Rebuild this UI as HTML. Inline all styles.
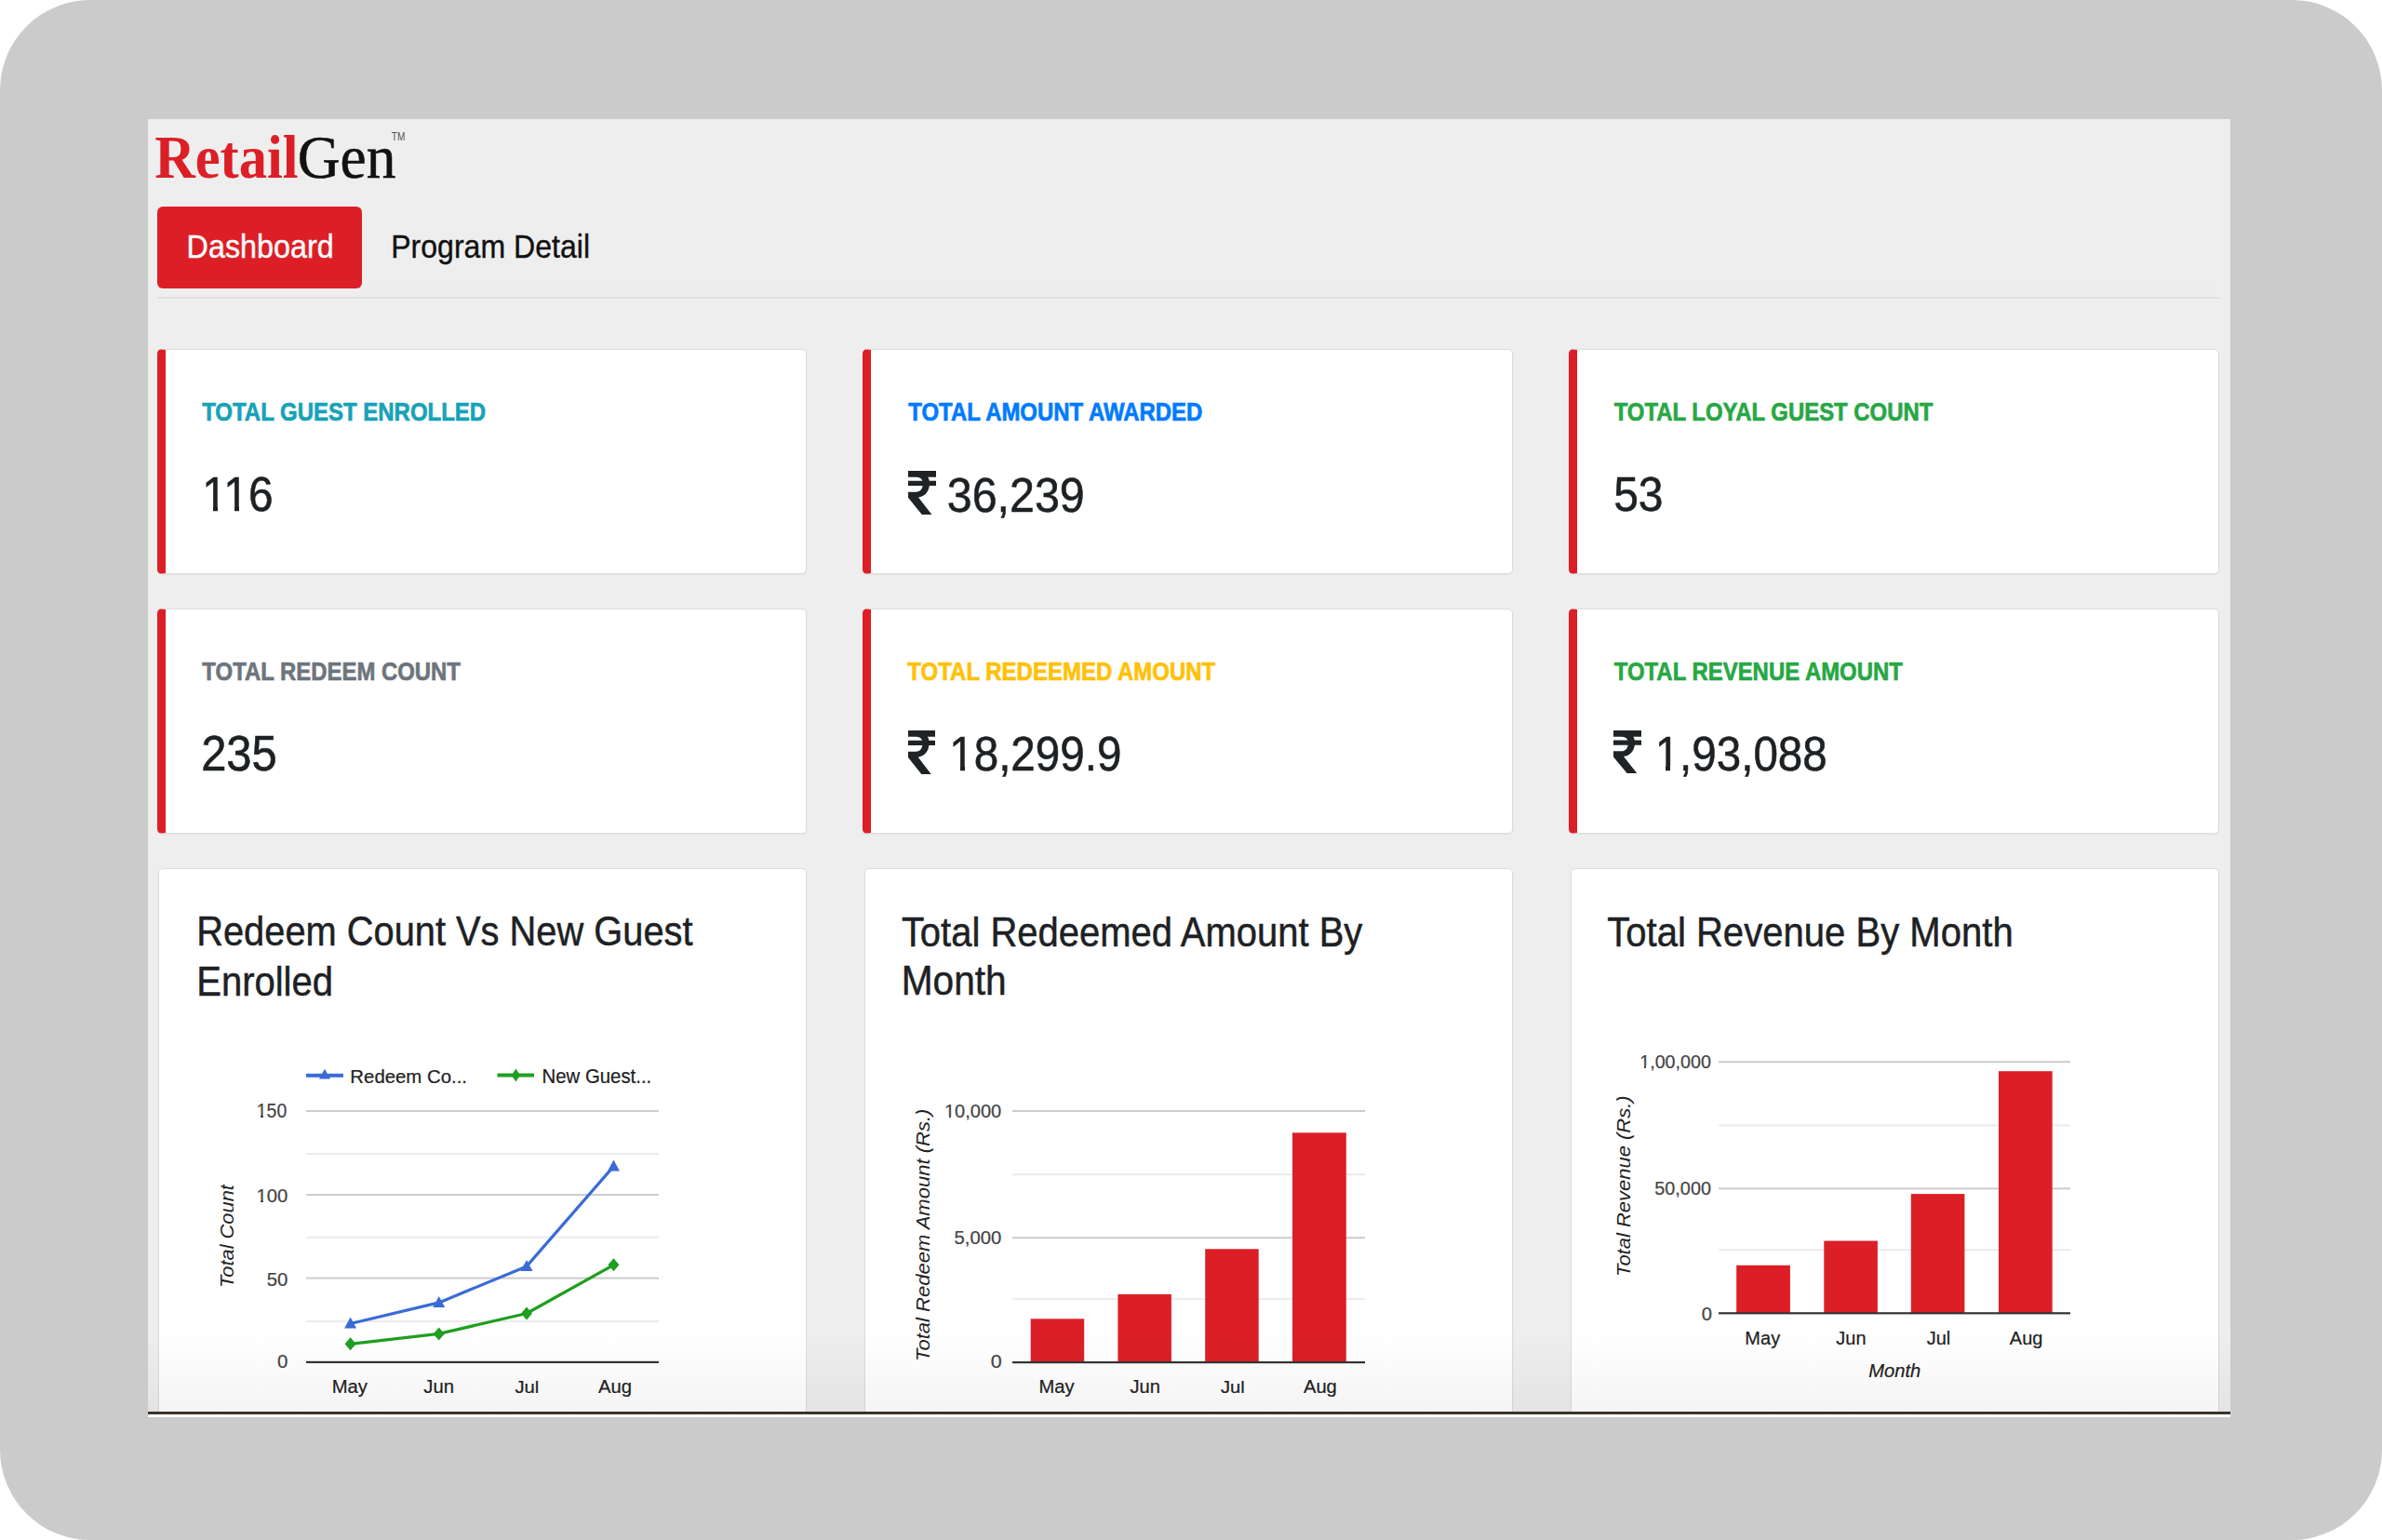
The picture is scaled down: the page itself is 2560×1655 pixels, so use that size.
<!DOCTYPE html>
<html><head><meta charset="utf-8">
<style>
html,body{margin:0;padding:0;width:2560px;height:1655px;overflow:hidden;background:#fff;font-family:"Liberation Sans",sans-serif;}
.a{position:absolute;display:block}
.t{position:absolute;white-space:nowrap;line-height:1;transform-origin:0 0;}
.frame{position:absolute;left:0;top:0;width:2560px;height:1655px;background:#cbcbcb;border-radius:97px;}
.panel{position:absolute;left:159px;top:128px;width:2238px;height:1389px;background:#eeeeee;overflow:hidden}
.card{position:absolute;background:#fff;border:1px solid #dcdcdc;border-radius:5px;box-sizing:border-box;box-shadow:0 1px 1.5px rgba(0,0,0,0.05)}
.stat{border-left:9px solid #dc1f26;}
.fade{position:absolute;left:159px;top:1430px;width:2238px;height:88px;background:linear-gradient(to bottom,rgba(0,0,0,0),rgba(0,0,0,0.045));}
</style></head><body>
<div class="frame"></div>
<div class="panel"></div>
<div class="a" style="left:169px;top:309px;width:2216px;height:1px;background:#e9e9e7"></div>
<div class="a" style="left:169px;top:319px;width:2216px;height:2px;background:#e0e0e0"></div>
<div class="a" style="left:169px;top:222px;width:220px;height:88px;background:#dc1f26;border-radius:6px"></div>
<div class="card stat" style="left:169px;top:375px;width:698px;height:242px"></div>
<div class="card stat" style="left:927px;top:375px;width:699px;height:242px"></div>
<div class="card stat" style="left:1686px;top:375px;width:699px;height:242px"></div>
<div class="card stat" style="left:169px;top:654px;width:698px;height:242px"></div>
<div class="card stat" style="left:927px;top:654px;width:699px;height:242px"></div>
<div class="card stat" style="left:1686px;top:654px;width:699px;height:242px"></div>
<div class="a" style="left:0;top:0;width:2560px;height:1517px;overflow:hidden">
<div class="card" style="left:170px;top:933px;width:697px;height:700px"></div>
<div class="card" style="left:929px;top:933px;width:697px;height:700px"></div>
<div class="card" style="left:1688px;top:933px;width:697px;height:700px"></div>
</div>
<svg class="a" style="left:0;top:0" width="2560" height="1655"><rect x="329" y="1193.0" width="379" height="2" fill="#cccccc"/><rect x="329" y="1239.0" width="379" height="2" fill="#ebebeb"/><rect x="329" y="1283.0" width="379" height="2" fill="#cccccc"/><rect x="329" y="1328.8" width="379" height="2" fill="#ebebeb"/><rect x="329" y="1372.6" width="379" height="2" fill="#cccccc"/><rect x="329" y="1419.0" width="379" height="2" fill="#ebebeb"/><rect x="329" y="1462.8" width="379" height="2.2" fill="#333"/><rect x="1088" y="1193.0" width="379" height="2" fill="#cccccc"/><rect x="1088" y="1261.2" width="379" height="2" fill="#ebebeb"/><rect x="1088" y="1329.2" width="379" height="2" fill="#cccccc"/><rect x="1088" y="1394.8" width="379" height="2" fill="#ebebeb"/><rect x="1107.7" y="1417.3" width="57.5" height="46.7" fill="#dc1f26"/><rect x="1201.4" y="1390.9" width="57.5" height="73.1" fill="#dc1f26"/><rect x="1295.2" y="1342.3" width="57.5" height="121.7" fill="#dc1f26"/><rect x="1389.0" y="1217.3" width="57.8" height="246.7" fill="#dc1f26"/><rect x="1088" y="1463" width="379" height="2.2" fill="#333"/><rect x="1847" y="1140.2" width="378" height="2" fill="#cccccc"/><rect x="1847" y="1208.4" width="378" height="2" fill="#ebebeb"/><rect x="1847" y="1276.3" width="378" height="2" fill="#cccccc"/><rect x="1847" y="1342.2" width="378" height="2" fill="#ebebeb"/><rect x="1866.2" y="1359.8" width="57.7" height="51.5" fill="#dc1f26"/><rect x="1960.3" y="1333.5" width="57.6" height="77.8" fill="#dc1f26"/><rect x="2053.8" y="1283.1" width="57.6" height="128.2" fill="#dc1f26"/><rect x="2148.0" y="1151.2" width="57.7" height="260.1" fill="#dc1f26"/><rect x="1847" y="1410.2" width="378" height="2.2" fill="#333"/><polyline fill="none" stroke="#3a6bd6" stroke-width="3.2" stroke-linejoin="round" points="376.6,1422.5 471.7,1399.9 566.0,1360.9 659.5,1253.4"/><polyline fill="none" stroke="#1f9e1f" stroke-width="3.2" stroke-linejoin="round" points="376.6,1444.3 471.7,1433.4 566.0,1411.5 659.5,1359.3"/><path d="M376.6 1415.5 L383.1 1427.5 L370.1 1427.5Z" fill="#3a6bd6"/><path d="M471.7 1392.9 L478.2 1404.9 L465.2 1404.9Z" fill="#3a6bd6"/><path d="M566.0 1353.9 L572.5 1365.9 L559.5 1365.9Z" fill="#3a6bd6"/><path d="M659.5 1246.4 L666.0 1258.4 L653.0 1258.4Z" fill="#3a6bd6"/><path d="M376.6 1437.3 L382.6 1444.3 L376.6 1451.3 L370.6 1444.3Z" fill="#1f9e1f"/><path d="M471.7 1426.4 L477.7 1433.4 L471.7 1440.4 L465.7 1433.4Z" fill="#1f9e1f"/><path d="M566.0 1404.5 L572.0 1411.5 L566.0 1418.5 L560.0 1411.5Z" fill="#1f9e1f"/><path d="M659.5 1352.3 L665.5 1359.3 L659.5 1366.3 L653.5 1359.3Z" fill="#1f9e1f"/><rect x="329" y="1153.8" width="40" height="4" fill="#3a6bd6"/><path d="M349 1148.8 L355 1159.5 L343 1159.5Z" fill="#3a6bd6"/><rect x="534.5" y="1153.5" width="39.5" height="4" fill="#1f9e1f"/><path d="M554.4 1148.4 L559 1155.5 L554.4 1162.4 L549.8 1155.5Z" fill="#1f9e1f"/></svg>
<svg class="a" style="left:976.0px;top:506.3px" width="30.0" height="46.9" viewBox="0 0 30 47" preserveAspectRatio="none"><path fill="#1f2326" d="M0 0H30V6.8H21.3C22.1 8 22.6 9.3 22.8 10.8H30V16H22.8C22.2 22.6 17.6 27.6 11 28.6L25.4 47H14.8L0 28.9V22.7H8.2C12.4 22.7 15 20.3 15.6 16H0V10.8H15.3C14.6 8.3 12.2 6.8 8.4 6.8H0Z"/></svg>
<svg class="a" style="left:976.0px;top:785.0px" width="29.4" height="47.2" viewBox="0 0 30 47" preserveAspectRatio="none"><path fill="#1f2326" d="M0 0H30V6.8H21.3C22.1 8 22.6 9.3 22.8 10.8H30V16H22.8C22.2 22.6 17.6 27.6 11 28.6L25.4 47H14.8L0 28.9V22.7H8.2C12.4 22.7 15 20.3 15.6 16H0V10.8H15.3C14.6 8.3 12.2 6.8 8.4 6.8H0Z"/></svg>
<svg class="a" style="left:1734.4px;top:785.0px" width="30.0" height="46.2" viewBox="0 0 30 47" preserveAspectRatio="none"><path fill="#1f2326" d="M0 0H30V6.8H21.3C22.1 8 22.6 9.3 22.8 10.8H30V16H22.8C22.2 22.6 17.6 27.6 11 28.6L25.4 47H14.8L0 28.9V22.7H8.2C12.4 22.7 15 20.3 15.6 16H0V10.8H15.3C14.6 8.3 12.2 6.8 8.4 6.8H0Z"/></svg>
<div class="t" style="left:166.19px;top:136.74px;font-family:'Liberation Serif';font-weight:700;font-style:normal;font-size:60.40px;color:#dc1f26;transform:scaleY(1.0798);-webkit-text-stroke:0.00px #dc1f26;">Retail</div>
<div class="t" style="left:319.66px;top:135.66px;font-family:'Liberation Serif';font-weight:400;font-style:normal;font-size:63.54px;color:#111;transform:scaleY(1.0468);-webkit-text-stroke:0.50px #111;">Gen</div>
<div class="t" style="left:200.61px;top:246.80px;font-family:'Liberation Sans';font-weight:400;font-style:normal;font-size:32.32px;color:#fff;transform:scaleY(1.1097);-webkit-text-stroke:0.36px #fff;">Dashboard</div>
<div class="t" style="left:420.23px;top:246.63px;font-family:'Liberation Sans';font-weight:400;font-style:normal;font-size:32.07px;color:#111;transform:scaleY(1.1096);-webkit-text-stroke:0.35px #111;">Program Detail</div>
<div class="t" style="left:217.16px;top:428.76px;font-family:'Liberation Sans';font-weight:700;font-style:normal;font-size:23.98px;color:#17a2b8;transform:scaleY(1.1618);-webkit-text-stroke:0.60px #17a2b8;">TOTAL GUEST ENROLLED</div>
<div class="t" style="left:976.26px;top:428.76px;font-family:'Liberation Sans';font-weight:700;font-style:normal;font-size:23.95px;color:#007bff;transform:scaleY(1.1633);-webkit-text-stroke:0.60px #007bff;">TOTAL AMOUNT AWARDED</div>
<div class="t" style="left:1734.66px;top:428.76px;font-family:'Liberation Sans';font-weight:700;font-style:normal;font-size:23.91px;color:#28a745;transform:scaleY(1.1650);-webkit-text-stroke:0.60px #28a745;">TOTAL LOYAL GUEST COUNT</div>
<div class="t" style="left:217.36px;top:707.98px;font-family:'Liberation Sans';font-weight:700;font-style:normal;font-size:23.91px;color:#6c757d;transform:scaleY(1.1592);-webkit-text-stroke:0.60px #6c757d;">TOTAL REDEEM COUNT</div>
<div class="t" style="left:975.36px;top:707.98px;font-family:'Liberation Sans';font-weight:700;font-style:normal;font-size:23.99px;color:#ffc107;transform:scaleY(1.1555);-webkit-text-stroke:0.60px #ffc107;">TOTAL REDEEMED AMOUNT</div>
<div class="t" style="left:1734.76px;top:707.98px;font-family:'Liberation Sans';font-weight:700;font-style:normal;font-size:23.93px;color:#28a745;transform:scaleY(1.1580);-webkit-text-stroke:0.60px #28a745;">TOTAL REVENUE AMOUNT</div>
<div class="t one" style="left:217.32px;top:504.58px;font-family:'Liberation Sans';font-weight:400;font-style:normal;font-size:47.80px;color:#1d2124;transform:scaleY(1.0999);-webkit-text-stroke:0.53px #1d2124;">116</div>
<div class="t" style="left:1017.76px;top:504.58px;font-family:'Liberation Sans';font-weight:400;font-style:normal;font-size:48.38px;color:#1d2124;transform:scaleY(1.0865);-webkit-text-stroke:0.53px #1d2124;">36,239</div>
<div class="t" style="left:1734.18px;top:504.58px;font-family:'Liberation Sans';font-weight:400;font-style:normal;font-size:47.96px;color:#1d2124;transform:scaleY(1.0961);-webkit-text-stroke:0.53px #1d2124;">53</div>
<div class="t" style="left:216.15px;top:783.05px;font-family:'Liberation Sans';font-weight:400;font-style:normal;font-size:48.95px;color:#1d2124;transform:scaleY(1.0914);-webkit-text-stroke:0.54px #1d2124;">235</div>
<div class="t one" style="left:1020.23px;top:783.70px;font-family:'Liberation Sans';font-weight:400;font-style:normal;font-size:47.59px;color:#1d2124;transform:scaleY(1.1018);-webkit-text-stroke:0.52px #1d2124;">18,299.9</div>
<div class="t one" style="left:1778.63px;top:783.70px;font-family:'Liberation Sans';font-weight:400;font-style:normal;font-size:47.55px;color:#1d2124;transform:scaleY(1.1026);-webkit-text-stroke:0.52px #1d2124;">1,93,088</div>
<div class="t" style="left:211.21px;top:978.95px;font-family:'Liberation Sans';font-weight:400;font-style:normal;font-size:39.82px;color:#1d2124;transform:scaleY(1.1188);-webkit-text-stroke:0.44px #1d2124;">Redeem Count Vs New Guest</div>
<div class="t" style="left:211.20px;top:1031.97px;font-family:'Liberation Sans';font-weight:400;font-style:normal;font-size:40.03px;color:#1d2124;transform:scaleY(1.1096);-webkit-text-stroke:0.44px #1d2124;">Enrolled</div>
<div class="t" style="left:968.90px;top:978.77px;font-family:'Liberation Sans';font-weight:400;font-style:normal;font-size:39.98px;color:#1d2124;transform:scaleY(1.1317);-webkit-text-stroke:0.44px #1d2124;">Total Redeemed Amount By</div>
<div class="t" style="left:968.75px;top:1031.95px;font-family:'Liberation Sans';font-weight:400;font-style:normal;font-size:40.65px;color:#1d2124;transform:scaleY(1.0961);-webkit-text-stroke:0.45px #1d2124;">Month</div>
<div class="t" style="left:1727.20px;top:978.70px;font-family:'Liberation Sans';font-weight:400;font-style:normal;font-size:40.07px;color:#1d2124;transform:scaleY(1.1221);-webkit-text-stroke:0.44px #1d2124;">Total Revenue By Month</div>
<div class="t" style="left:376.37px;top:1147.00px;font-family:'Liberation Sans';font-weight:400;font-style:normal;font-size:20.37px;color:#222;transform:scaleY(0.9820);-webkit-text-stroke:0.22px #222;">Redeem Co...</div>
<div class="t" style="left:582.57px;top:1146.07px;font-family:'Liberation Sans';font-weight:400;font-style:normal;font-size:20.36px;color:#222;transform:scaleY(1.0597);-webkit-text-stroke:0.22px #222;">New Guest...</div>
<div class="t one" style="left:275.84px;top:1183.47px;font-family:'Liberation Sans';font-weight:400;font-style:normal;font-size:19.42px;color:#444;transform:scaleY(1.1107);-webkit-text-stroke:0.21px #444;">150</div>
<div class="t one" style="left:275.48px;top:1273.95px;font-family:'Liberation Sans';font-weight:400;font-style:normal;font-size:20.32px;color:#444;transform:scaleY(1.0334);-webkit-text-stroke:0.22px #444;">100</div>
<div class="t" style="left:286.68px;top:1364.05px;font-family:'Liberation Sans';font-weight:400;font-style:normal;font-size:20.39px;color:#444;transform:scaleY(1.0301);-webkit-text-stroke:0.22px #444;">50</div>
<div class="t" style="left:298.08px;top:1454.34px;font-family:'Liberation Sans';font-weight:400;font-style:normal;font-size:20.42px;color:#444;transform:scaleY(0.9654);-webkit-text-stroke:0.22px #444;">0</div>
<div class="t one" style="left:1014.89px;top:1184.34px;font-family:'Liberation Sans';font-weight:400;font-style:normal;font-size:20.07px;color:#444;transform:scaleY(0.9824);-webkit-text-stroke:0.22px #444;">10,000</div>
<div class="t" style="left:1025.49px;top:1320.14px;font-family:'Liberation Sans';font-weight:400;font-style:normal;font-size:20.29px;color:#444;transform:scaleY(0.9717);-webkit-text-stroke:0.22px #444;">5,000</div>
<div class="t" style="left:1064.64px;top:1454.04px;font-family:'Liberation Sans';font-weight:400;font-style:normal;font-size:21.47px;color:#444;transform:scaleY(0.9513);-webkit-text-stroke:0.24px #444;">0</div>
<div class="t one" style="left:1762.22px;top:1131.54px;font-family:'Liberation Sans';font-weight:400;font-style:normal;font-size:19.71px;color:#444;transform:scaleY(1.0003);-webkit-text-stroke:0.22px #444;">1,00,000</div>
<div class="t" style="left:1778.31px;top:1267.84px;font-family:'Liberation Sans';font-weight:400;font-style:normal;font-size:19.83px;color:#444;transform:scaleY(0.9941);-webkit-text-stroke:0.22px #444;">50,000</div>
<div class="t" style="left:1828.69px;top:1401.54px;font-family:'Liberation Sans';font-weight:400;font-style:normal;font-size:20.21px;color:#444;transform:scaleY(1.0108);-webkit-text-stroke:0.22px #444;">0</div>
<div class="t" style="left:2008.19px;top:1463.37px;font-family:'Liberation Sans';font-weight:400;font-style:italic;font-size:20.18px;color:#222;transform:scaleY(1.0045);-webkit-text-stroke:0.22px #222;">Month</div>
<div class="t" style="left:420.80px;top:141.22px;font-family:'Liberation Sans';font-weight:400;font-style:normal;font-size:10.07px;color:#555;transform:scaleY(1.2659);-webkit-text-stroke:0.00px #555;">TM</div>
<div class="t" style="left:356.68px;top:1480.10px;font-family:'Liberation Sans';font-weight:400;font-style:normal;font-size:20.28px;color:#222;transform:scaleY(0.9863);-webkit-text-stroke:0.22px #222">May</div>
<div class="t" style="left:1116.49px;top:1480.40px;font-family:'Liberation Sans';font-weight:400;font-style:normal;font-size:20.17px;color:#222;transform:scaleY(0.9918);-webkit-text-stroke:0.22px #222">May</div>
<div class="t" style="left:1875.35px;top:1427.27px;font-family:'Liberation Sans';font-weight:400;font-style:normal;font-size:20.00px;color:#222;transform:scaleY(1.0435);-webkit-text-stroke:0.22px #222">May</div>
<div class="t" style="left:455.33px;top:1480.10px;font-family:'Liberation Sans';font-weight:400;font-style:normal;font-size:20.28px;color:#222;transform:scaleY(0.9863);-webkit-text-stroke:0.22px #222">Jun</div>
<div class="t" style="left:1214.52px;top:1480.40px;font-family:'Liberation Sans';font-weight:400;font-style:normal;font-size:20.17px;color:#222;transform:scaleY(0.9918);-webkit-text-stroke:0.22px #222">Jun</div>
<div class="t" style="left:1973.35px;top:1427.27px;font-family:'Liberation Sans';font-weight:400;font-style:normal;font-size:20.00px;color:#222;transform:scaleY(1.0435);-webkit-text-stroke:0.22px #222">Jun</div>
<div class="t" style="left:553.38px;top:1480.92px;font-family:'Liberation Sans';font-weight:400;font-style:normal;font-size:20.28px;color:#222;transform:scaleY(0.9387);-webkit-text-stroke:0.22px #222">Jul</div>
<div class="t" style="left:1311.95px;top:1481.22px;font-family:'Liberation Sans';font-weight:400;font-style:normal;font-size:20.17px;color:#222;transform:scaleY(0.9439);-webkit-text-stroke:0.22px #222">Jul</div>
<div class="t" style="left:2070.75px;top:1428.12px;font-family:'Liberation Sans';font-weight:400;font-style:normal;font-size:20.00px;color:#222;transform:scaleY(0.9931);-webkit-text-stroke:0.22px #222">Jul</div>
<div class="t" style="left:642.96px;top:1480.10px;font-family:'Liberation Sans';font-weight:400;font-style:normal;font-size:20.28px;color:#222;transform:scaleY(0.9863);-webkit-text-stroke:0.22px #222">Aug</div>
<div class="t" style="left:1400.96px;top:1480.40px;font-family:'Liberation Sans';font-weight:400;font-style:normal;font-size:20.17px;color:#222;transform:scaleY(0.9918);-webkit-text-stroke:0.22px #222">Aug</div>
<div class="t" style="left:2159.80px;top:1427.27px;font-family:'Liberation Sans';font-weight:400;font-style:normal;font-size:20.00px;color:#222;transform:scaleY(1.0435);-webkit-text-stroke:0.22px #222">Aug</div>
<div class="t" style="left:233.98px;top:1383.76px;font-family:'Liberation Sans';font-style:italic;font-size:21.83px;color:#222;transform:rotate(-90deg) scaleY(0.9224)">Total Count</div>
<div class="t" style="left:982.43px;top:1463.38px;font-family:'Liberation Sans';font-style:italic;font-size:22.04px;color:#222;transform:rotate(-90deg) scaleY(0.9326)">Total Redeem Amount (Rs.)</div>
<div class="t" style="left:1735.02px;top:1372.38px;font-family:'Liberation Sans';font-style:italic;font-size:21.98px;color:#222;transform:rotate(-90deg) scaleY(0.9415)">Total Revenue (Rs.)</div>
<div class="a" style="left:218.65px;top:544.11px;width:10.27px;height:6.65px;background:#fff"></div>
<div class="a" style="left:233.97px;top:544.11px;width:10.02px;height:6.65px;background:#fff"></div>
<div class="a" style="left:241.68px;top:544.11px;width:10.27px;height:6.65px;background:#fff"></div>
<div class="a" style="left:257.00px;top:544.11px;width:10.02px;height:6.65px;background:#fff"></div>
<div class="a" style="left:1021.54px;top:823.12px;width:10.23px;height:6.64px;background:#fff"></div>
<div class="a" style="left:1036.80px;top:823.12px;width:9.98px;height:6.64px;background:#fff"></div>
<div class="a" style="left:1779.95px;top:823.12px;width:10.22px;height:6.64px;background:#fff"></div>
<div class="a" style="left:1795.20px;top:823.12px;width:9.97px;height:6.64px;background:#fff"></div>
<div class="a" style="left:275.78px;top:1199.28px;width:4.68px;height:4.03px;background:#fff"></div>
<div class="a" style="left:282.69px;top:1199.28px;width:4.57px;height:4.03px;background:#fff"></div>
<div class="a" style="left:275.46px;top:1289.32px;width:4.86px;height:3.99px;background:#fff"></div>
<div class="a" style="left:282.64px;top:1289.32px;width:4.75px;height:3.99px;background:#fff"></div>
<div class="a" style="left:1014.85px;top:1198.72px;width:4.81px;height:3.89px;background:#fff"></div>
<div class="a" style="left:1021.96px;top:1198.72px;width:4.70px;height:3.89px;background:#fff"></div>
<div class="a" style="left:1762.18px;top:1145.92px;width:4.74px;height:3.89px;background:#fff"></div>
<div class="a" style="left:1769.18px;top:1145.92px;width:4.63px;height:3.89px;background:#fff"></div>

<div class="fade"></div>
<div class="a" style="left:159px;top:1517px;width:2238px;height:3px;background:#3b332b"></div>
<div class="a" style="left:159px;top:1520px;width:2238px;height:3px;background:#fdfdfd"></div>
</body></html>
